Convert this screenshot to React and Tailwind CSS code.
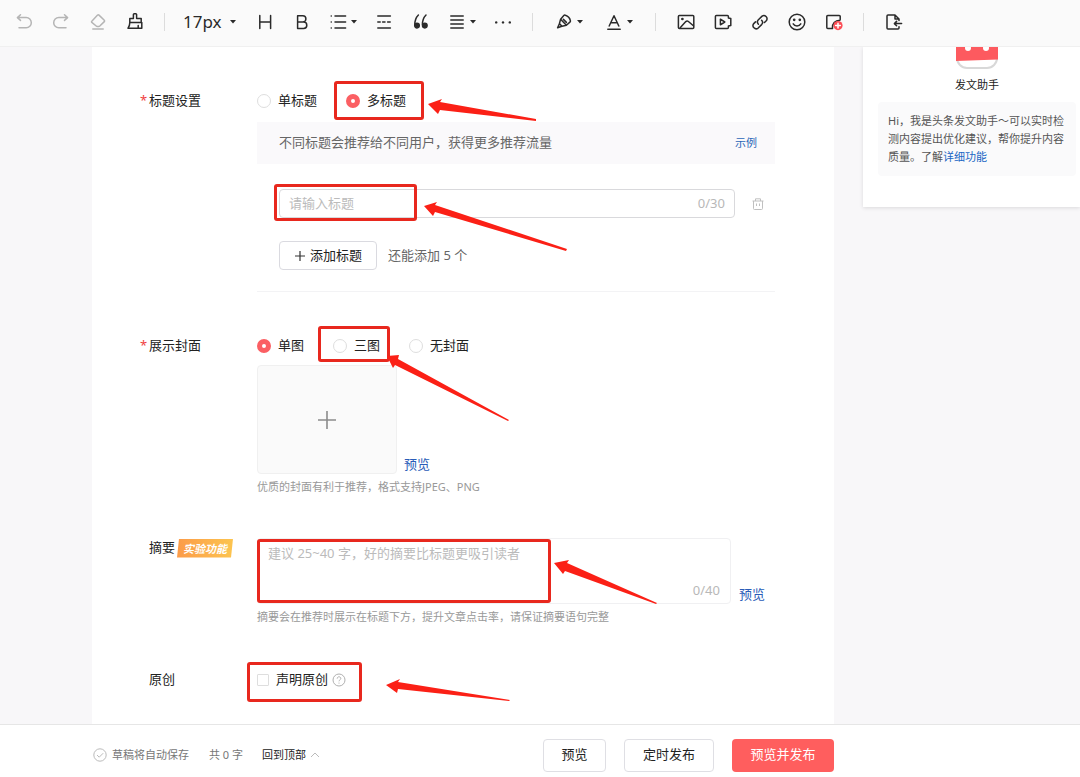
import React, { useState } from 'react';

const Icon = ({ children, className = 'text-[#2a2a2a]' }) => (
    <svg
        viewBox="0 0 20 20"
        className={`h-5 w-5 shrink-0 ${className}`}
        fill="none"
        stroke="currentColor"
        strokeWidth="1.5"
        strokeLinecap="round"
        strokeLinejoin="round"
        aria-hidden="true"
    >
        {children}
    </svg>
);

const Caret = () => (
    <svg viewBox="0 0 6 4" className="h-1 w-1.5 shrink-0 text-[#2a2a2a]" fill="currentColor" aria-hidden="true">
        <path d="M0 0h6L3 3.5z" />
    </svg>
);

const icons = {
    undo: <path d="M6.5 2.8 3.4 5.6l3.1 2.8M3.6 5.6h8.6a5.1 5.1 0 0 1 0 10.2H5" />,
    redo: <path d="M13.5 2.8l3.1 2.8-3.1 2.8M16.4 5.6H7.8a5.1 5.1 0 0 0 0 10.2H15" />,
    eraser: (
        <path d="M3.8 9.2 9.6 3.1a1 1 0 0 1 1.4 0l5.3 5.1a1 1 0 0 1 0 1.4L11.8 14a1.5 1.5 0 0 1-1 .4H9.2a1.5 1.5 0 0 1-1-.4l-4.4-3.6a.8.8 0 0 1 0-1.2zM4.8 17h10.4" />
    ),
    brush: <path d="M8.4 6.4V2.6a.8.8 0 0 1 .8-.8h1.6a.8.8 0 0 1 .8.8v3.8h4.6v4.2H4.8V6.4zM4.8 10.6c0 2.4-.5 4-1.8 5.6h13.8v-5.6M13.2 13.4v2.6" />,
    heading: <path d="M4.8 3.6v13M15.6 3.6v13M4.8 10h10.8" />,
    bold: <path d="M5.6 3.8h5.2a3.1 3.1 0 0 1 0 6.2H5.6zM5.6 10h6a3.2 3.2 0 0 1 0 6.4h-6z" />,
    list: <path d="M3.2 4h.1M3.2 10h.1M3.2 16h.1M7 4h10.6M7 10h10.6M7 16h10.6" />,
    rule: <path d="M3.8 4h12.6M3.8 16h12.6M3.8 10h2.4M8.6 10H11M13.6 10h2.6" />,
    quote: (
        <g fill="currentColor">
            <path d="M7.400 3C5 5.400 3.800 8.400 3.800 12.600" fill="none" />
            <circle cx="6" cy="13.6" r="2.3" />
            <path d="M15 3c-2.400 2.400-3.600 5.400-3.600 9.600" fill="none" />
            <circle cx="13.8" cy="13.6" r="2.3" />
        </g>
    ),
    align: <path d="M3.8 4h12.4M3.8 8h12.4M3.8 12h12.4M3.8 16h12.4" />,
    more: (
        <g fill="currentColor" stroke="none">
            <circle cx="3.2" cy="10.4" r="1.2" />
            <circle cx="10" cy="10.4" r="1.2" />
            <circle cx="16.8" cy="10.4" r="1.2" />
        </g>
    ),
    marker: (
        <path d="M6.600 7.200 9.800 3.600a1.500 1.500 0 0 1 1.600-.4c2.600.8 4.400 2.800 5 5.400a1.500 1.500 0 0 1-.5 1.500L12.400 13.200M6.600 7.200l5.800 6M6.600 7.200 5.400 11.600l2.600 2.600 4.400-1M5.400 11.800l-1.800 4 4.200-1.600M9.400 7.400l3 3" />
    ),
    color: <path d="M5.2 14 10 3.8 14.8 14M6.8 10.8h6.4M3.8 17.2h12.4" />,
    image: (
        <>
            <rect x="2.4" y="3.4" width="15.4" height="13.2" rx="1" />
            <path d="M4.2 15.8l5.6-6.2c.8-.8 1.8-.8 2.6-.1l5 4.3" />
            <circle cx="6.4" cy="7" r=".6" fill="currentColor" />
        </>
    ),
    video: (
        <>
            <path d="M15.4 6V4.4a1 1 0 0 0-1-1h-11a1 1 0 0 0-1 1v11.2a1 1 0 0 0 1 1h11a1 1 0 0 0 1-1V14l2.4-.6V6.6z" />
            <path d="M7.4 7.2v5.6l4.4-2.8z" />
        </>
    ),
    link: (
        <path d="M8.4 12.2a3.2 3.2 0 0 1 0-4.4l3.7-3.7a3.2 3.2 0 0 1 4.4 4.4l-2 2M11.6 8.2a3.2 3.2 0 0 1 0 4.4l-3.7 3.7a3.2 3.2 0 0 1-4.4-4.4l2-2" />
    ),
    emoji: (
        <>
            <circle cx="10" cy="10" r="7.8" />
            <path d="M6.2 11.8c1.6 2.8 6 2.8 7.6 0" />
            <circle cx="7.2" cy="7.8" r=".6" fill="currentColor" />
            <circle cx="12.8" cy="7.8" r=".6" fill="currentColor" />
        </>
    ),
    widget: (
        <>
            <path d="M8.6 16.6H3.8a1 1 0 0 1-1-1V4.4a1 1 0 0 1 1-1h11.4a1 1 0 0 1 1 1v3.2M8.4 16.4C8 11.6 11 8.4 16 8.2" />
            <circle cx="14" cy="13.6" r="4.6" fill="#fb4d55" stroke="none" />
            <path d="M14 11.2V16M11.6 13.6h4.8" stroke="#fff" />
        </>
    ),
    exportDoc: (
        <>
            <path d="M15 14.8V16a1 1 0 0 1-1 1H4a1 1 0 0 1-1-1V4a1 1 0 0 1 1-1h7l4 4v1.4M11 3v4h4" />
            <path d="M17.6 11.6h-7M12.6 9.400l-2.200 2.200 2.200 2.200" />
        </>
    ),
};

const ToolButton = ({ name, label, muted }) => (
    <button type="button" aria-label={label} className="flex h-full w-[37px] items-center justify-center">
        <Icon className={muted ? 'text-[#b5b5b5]' : 'text-[#2a2a2a]'}>{icons[name]}</Icon>
    </button>
);

const ToolMenu = ({ name, label, className = 'w-[45px] pl-2' }) => (
    <button type="button" aria-label={label} className={`flex h-full items-center gap-[3px] ${className}`}>
        <Icon>{icons[name]}</Icon>
        <Caret />
    </button>
);

const Divider = () => <span className="mx-[11px] h-[18px] w-px bg-[#dcdcdc]" />;

const Toolbar = () => (
    <header className="relative z-10 flex h-[47px] items-center border-b border-[#f0f0f0] bg-[#fafafa] pb-0.5 pl-[5px]">
        <ToolButton name="undo" label="撤销" muted />
        <ToolButton name="redo" label="重做" muted />
        <ToolButton name="eraser" label="清除格式" muted />
        <ToolButton name="brush" label="格式刷" />
        <Divider />
        <button type="button" className="flex h-full w-[70px] items-center gap-2 pl-[7px] text-[17px] text-[#2a2a2a]">
            17px
            <Caret />
        </button>
        <ToolButton name="heading" label="标题" />
        <ToolButton name="bold" label="加粗" />
        <ToolMenu name="list" label="列表" />
        <ToolButton name="rule" label="分割线" />
        <ToolButton name="quote" label="引用" />
        <ToolMenu name="align" label="对齐" />
        <ToolButton name="more" label="更多" />
        <Divider />
        <ToolMenu name="marker" label="背景色" className="w-[50px] pl-2.5" />
        <ToolMenu name="color" label="文字颜色" className="w-[50px] pl-2.5" />
        <Divider />
        <ToolButton name="image" label="图片" />
        <ToolButton name="video" label="视频" />
        <ToolButton name="link" label="链接" />
        <ToolButton name="emoji" label="表情" />
        <ToolButton name="widget" label="组件" />
        <Divider />
        <ToolButton name="exportDoc" label="导入文档" />
    </header>
);

// Red guide marks that sit on top of the controls they point at
const Mark = ({ className }) => (
    <span className={`pointer-events-none absolute rounded-[3px] border-[3px] border-[#e8281e] ${className}`} />
);

const Arrow = ({ points, className }) => (
    <svg className={`pointer-events-none absolute z-10 overflow-visible ${className}`} fill="#fb2016" aria-hidden="true">
        <polygon points={points} />
    </svg>
);

const Row = ({ label, required, badge, className = '', children }) => (
    <div className={`flex ${className}`}>
        <div className="flex h-5 w-[165px] shrink-0 items-center pl-12 text-[13px] text-[#222]">
            <span className="w-[9px] text-[#f04142]">{required && '*'}</span>
            {label}
            {badge && (
                <span className="ml-0.5 h-[19px] w-14 bg-linear-to-r from-[#fb9b49] to-[#fcc44f] text-center text-[11px] leading-[19px] font-bold text-white italic [clip-path:polygon(2px_0,100%_0,calc(100%-2px)_100%,0_100%)]">
                    {badge}
                </span>
            )}
        </div>
        <div className="min-w-0 flex-1">{children}</div>
    </div>
);

const Radio = ({ name, value, current, onChange, children }) => (
    <label className="relative flex h-5 items-center gap-[7px] text-[13px] text-[#222]">
        <input
            type="radio"
            name={name}
            value={value}
            checked={current === value}
            onChange={() => onChange(value)}
            className="h-3.5 w-3.5 appearance-none rounded-full border border-[#dedede] bg-white checked:border-[5px] checked:border-[#fb5f63]"
        />
        {value}
        {children}
    </label>
);

const TitleSettings = () => {
    const [mode, setMode] = useState('多标题');
    const [title, setTitle] = useState('');

    return (
        <Row label="标题设置" required>
            <div className="flex gap-[29px]">
                <Radio name="title" value="单标题" current={mode} onChange={setMode} />
                <Radio name="title" value="多标题" current={mode} onChange={setMode}>
                    <Mark className="-top-2.5 -right-[18px] -bottom-[9px] -left-3" />
                    <Arrow className="top-2 left-[82px] h-[22px] w-[108px]" points="0,5 14,0 12,3 108,20 108,22 12,11 10,15" />
                </Radio>
            </div>
            <div className="mt-[11px] mr-[59px] border-b border-[#f3f3f5]">
                <div className="flex h-[42px] items-center justify-between bg-[#faf9fb] pr-[18px] pl-[22px]">
                    <p className="text-[13px] text-[#666]">不同标题会推荐给不同用户，获得更多推荐流量</p>
                    <a href="#example" className="text-[11px] text-[#2a66b8]">示例</a>
                </div>
                <div className="pt-[25px] pr-2.5 pb-[21px] pl-[22px]">
                    <div className="flex items-center gap-4">
                        <div className="relative flex h-[29px] flex-1 items-center rounded-sm border border-[#d9d9dc] px-[9px] text-[13px]">
                            <input
                                type="text"
                                aria-label="标题"
                                placeholder="请输入标题"
                                value={title}
                                onChange={(e) => setTitle(e.target.value)}
                                className="min-w-0 flex-1 text-[#222] outline-none placeholder:text-[#bbb]"
                            />
                            <span className="text-[#b8b8b8]">{title.length}/30</span>
                            <Mark className="-top-1.5 -left-1.5 h-[37px] w-[143px]" />
                            <Arrow className="top-3 left-36 h-[49px] w-[143px]" points="0,4 13,0 11,3 143,47 142,49 11,10 9,14" />
                        </div>
                        <button type="button" aria-label="删除标题">
                            <svg viewBox="0 0 14 14" className="h-3.5 w-3.5 text-[#c0c0c0]" fill="none" stroke="currentColor" strokeWidth="1">
                                <path d="M1.5 4h11M4.5 4V1.8h5V4M2.5 4v7.5a1 1 0 0 0 1 1h7a1 1 0 0 0 1-1V4M5.5 6.5V9M8.5 6.5V9" />
                            </svg>
                        </button>
                    </div>
                    <div className="mt-[23px] flex items-center gap-[11px] text-[13px]">
                        <button type="button" className="flex h-[29px] w-[98px] items-center justify-center gap-1 rounded-sm border border-[#dadae0] text-[#222]">
                            <svg viewBox="0 0 12 12" className="h-3 w-3" stroke="#333" strokeWidth="1.2" aria-hidden="true">
                                <path d="M6 1v10M1 6h10" />
                            </svg>
                            添加标题
                        </button>
                        <span className="text-[#666]">还能添加 5 个</span>
                    </div>
                </div>
            </div>
        </Row>
    );
};

const CoverSettings = () => {
    const [cover, setCover] = useState('单图');

    return (
        <Row label="展示封面" required className="mt-11">
            <div className="flex gap-[29px]">
                <Radio name="cover" value="单图" current={cover} onChange={setCover} />
                <Radio name="cover" value="三图" current={cover} onChange={setCover}>
                    <Mark className="-top-2.5 -right-2.5 -bottom-1.5 -left-[15px]" />
                    <Arrow className="top-[19px] left-[54px] h-[66px] w-[122px]" points="0,1 12,0 11,4 122,65 121,66 8,10 6,13" />
                </Radio>
                <Radio name="cover" value="无封面" current={cover} onChange={setCover} />
            </div>
            <div className="mt-[9px] flex items-end gap-[7px]">
                <button
                    type="button"
                    aria-label="上传封面"
                    className="flex h-[109px] w-[140px] items-center justify-center rounded-sm border border-[#f0f0f0] bg-[#fafafa]"
                >
                    <svg viewBox="0 0 20 20" className="h-5 w-5" stroke="#8c8c8c" strokeWidth="1.6" aria-hidden="true">
                        <path d="M10 1v18M1 10h18" />
                    </svg>
                </button>
                <a href="#cover-preview" className="text-[13px] leading-5 text-[#2a5cb8]">预览</a>
            </div>
            <p className="mt-1 text-[11px] leading-[18px] text-[#999]">优质的封面有利于推荐，格式支持JPEG、PNG</p>
        </Row>
    );
};

const SummarySettings = () => {
    const [summary, setSummary] = useState('');

    return (
        <Row label="摘要" badge="实验功能" className="mt-[42px]">
            <div className="mr-[69px] flex items-end gap-2">
                <div className="relative flex h-[66px] flex-1 rounded-sm border border-[#f0f0f2] text-[13px]">
                    <textarea
                        aria-label="摘要"
                        placeholder="建议 25~40 字，好的摘要比标题更吸引读者"
                        value={summary}
                        onChange={(e) => setSummary(e.target.value)}
                        className="w-full resize-none px-2.5 py-[5px] leading-[18px] text-[#222] outline-none placeholder:text-[#bbb]"
                    />
                    <span className="absolute right-2.5 bottom-1 leading-[18px] text-[#b8b8b8]">{summary.length}/40</span>
                    <Mark className="-left-px top-0 h-16 w-[294px]" />
                    <Arrow className="top-[21px] left-[296px] h-11 w-[103px]" points="0,3 15,0 13,3 103,43 102,44 11,11 9,14" />
                </div>
                <a href="#summary-preview" className="text-[13px] leading-5 text-[#2a5cb8]">预览</a>
            </div>
            <p className="mt-1 text-[11px] leading-[18px] text-[#999]">
                摘要会在推荐时展示在标题下方，提升文章点击率，请保证摘要语句完整
            </p>
        </Row>
    );
};

const OriginalSettings = () => (
    <Row label="原创" className="mt-11">
        <div className="relative flex h-5 items-center text-[13px] text-[#222]">
            <label className="flex items-center gap-[7px]">
                <input type="checkbox" className="h-3 w-3 appearance-none rounded-[1px] border border-[#dedede] bg-white checked:bg-[#fb5f63]" />
                声明原创
            </label>
            <svg viewBox="0 0 14 14" className="ml-1 h-3.5 w-3.5 text-[#b0b0b0]" fill="none" stroke="currentColor" strokeWidth="1" aria-hidden="true">
                <circle cx="7" cy="7" r="6" />
                <path d="M5.2 5.6c0-2.4 3.6-2.4 3.6-.1 0 1.3-1.8 1.4-1.8 2.8M7 9.6v1" />
            </svg>
            <Mark className="-top-2 -left-2.5 h-10 w-[115px]" />
            <Arrow className="top-[9px] left-[129px] h-[22px] w-[124px]" points="0,6 14,0 12,3 124,21 123,22 12,10 11,14" />
        </div>
    </Row>
);

const Assistant = () => (
    <aside className="w-[217px] shrink-0 self-start bg-white pr-1 pb-[31px] pl-[15px] shadow-[0_1px_4px_rgba(0,0,0,0.12)]">
        <svg viewBox="0 0 42 23" className="mx-auto h-[23px] w-[42px]" aria-hidden="true">
            <path d="M1 0v11a10 10 0 0 0 10 10h20a10 10 0 0 0 10-10V0" fill="#fff" stroke="#d8d8d8" strokeWidth="2" />
            <path d="M0 0h42v12.500L0 14z" fill="#fd5a5f" />
            <circle cx="12" cy="1" r="3" fill="#fff" />
            <circle cx="30" cy="1" r="3" fill="#fff" />
        </svg>
        <h2 className="mt-1.5 text-center text-[11px] leading-[18px] text-[#222]">发文助手</h2>
        <p className="mt-2 rounded-sm bg-[#fafafb] px-2.5 py-2.5 text-[11px] leading-[18px] text-[#555]">
            Hi，我是头条发文助手～可以实时检测内容提出优化建议，帮你提升内容质量。了解
            <a href="#features" className="text-[#1a66c4]">详细功能</a>
        </p>
    </aside>
);

const Footer = () => (
    <footer className="flex h-[53px] items-center justify-between border-t border-[#e6e6e6] bg-white pt-2 pr-[246px] pl-[93px]">
        <div className="flex items-center text-[11px] text-[#777]">
            <svg viewBox="0 0 14 14" className="mr-[5px] h-3.5 w-3.5 text-[#bbb]" fill="none" stroke="currentColor" strokeWidth="1" aria-hidden="true">
                <circle cx="7" cy="7" r="6.2" />
                <path d="M4 7l2.200 2.200L10.200 5.200" />
            </svg>
            <span>草稿将自动保存</span>
            <span className="ml-5">共 0 字</span>
            <button type="button" className="ml-[19px] flex items-center gap-1 text-[#222]">
                回到顶部
                <svg viewBox="0 0 10 6" className="h-1.5 w-2.5" fill="none" stroke="#bbb" aria-hidden="true">
                    <path d="M1 5l4-4 4 4" />
                </svg>
            </button>
        </div>
        <div className="flex gap-[18px] text-[13px] text-[#222]">
            <button type="button" className="h-[33px] w-[63px] rounded-sm border border-[#dfdfe4]">预览</button>
            <button type="button" className="h-[33px] w-[90px] rounded-sm border border-[#dfdfe4]">定时发布</button>
            <button type="button" className="h-[33px] w-[102px] rounded-sm bg-[#ff5e5e] text-white">预览并发布</button>
        </div>
    </footer>
);

const App = () => (
    <div className="flex min-h-screen flex-col bg-[#f8f7f9] font-['Noto_Sans','Noto_Sans_CJK_SC',sans-serif]">
        <Toolbar />
        <div className="flex flex-1 gap-[29px] pl-[92px]">
            <main className="min-w-0 flex-1 bg-white pt-11">
                <TitleSettings />
                <CoverSettings />
                <SummarySettings />
                <OriginalSettings />
            </main>
            <Assistant />
        </div>
        <Footer />
    </div>
);

export default App;
